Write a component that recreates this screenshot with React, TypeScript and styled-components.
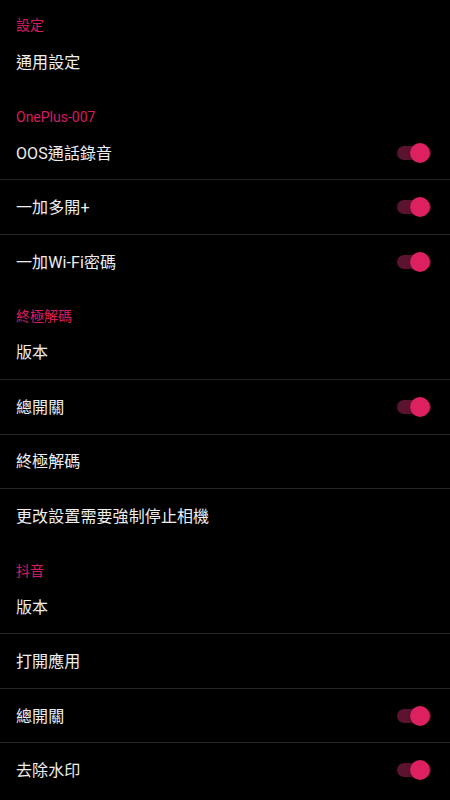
import React, { useState } from "react";
import styled, { createGlobalStyle } from "styled-components";

type Item = {
  id: string;
  label: string;
  toggle?: boolean;
};

type Section = {
  id: string;
  title: string;
  items: Item[];
};

const sections: Section[] = [
  { id: "s1", title: "設定", items: [{ id: "general", label: "通用設定" }] },
  {
    id: "s2",
    title: "OnePlus-007",
    items: [
      { id: "oos", label: "OOS通話錄音", toggle: true },
      { id: "multi", label: "一加多開+", toggle: true },
      { id: "wifi", label: "一加Wi-Fi密碼", toggle: true },
    ],
  },
  {
    id: "s3",
    title: "終極解碼",
    items: [
      { id: "ver1", label: "版本" },
      { id: "master1", label: "總開關", toggle: true },
      { id: "decode", label: "終極解碼" },
      { id: "camera", label: "更改設置需要強制停止相機" },
    ],
  },
  {
    id: "s4",
    title: "抖音",
    items: [
      { id: "ver2", label: "版本" },
      { id: "open", label: "打開應用" },
      { id: "master2", label: "總開關", toggle: true },
      { id: "watermark", label: "去除水印", toggle: true },
    ],
  },
];

const GlobalStyle = createGlobalStyle`
  html, body {
    margin: 0;
    padding: 0;
    background: #000;
  }
  body {
    font-family: Roboto, "Noto Sans CJK TC", "Noto Sans", sans-serif;
    -webkit-font-smoothing: antialiased;
  }
`;

const Screen = styled.div`
  width: 450px;
  height: 800px;
  overflow: hidden;
  background: #000;
`;

const CategoryTitle = styled.div<{ first: boolean }>`
  height: ${(p) => (p.first ? "35px" : "36.25px")};
  box-sizing: border-box;
  padding: ${(p) => (p.first ? "17px" : "19px")} 16px 0;
  font-size: 14px;
  line-height: 16px;
  color: #d81b60;
`;

const Row = styled.div<{ divider: boolean }>`
  height: 54.5px;
  box-sizing: border-box;
  padding: 2px 19px 0 16px;
  display: flex;
  align-items: center;
  justify-content: space-between;
  border-bottom: 1px solid ${(p) => (p.divider ? "#262626" : "transparent")};
`;

const Label = styled.span`
  font-size: 16px;
  line-height: 20px;
  color: #eeeeee;
  letter-spacing: 0.1px;
`;

const Switch = styled.button<{ on: boolean }>`
  position: relative;
  width: 34px;
  height: 14px;
  padding: 0;
  border: none;
  border-radius: 7px;
  background: ${(p) => (p.on ? "#5b1330" : "#3a3a3a")};
  cursor: pointer;
  margin-top: -2px;
`;

const Thumb = styled.span<{ on: boolean }>`
  position: absolute;
  top: -3px;
  left: ${(p) => (p.on ? "13px" : "-1px")};
  width: 20px;
  height: 20px;
  border-radius: 50%;
  background: ${(p) => (p.on ? "#dd2160" : "#bdbdbd")};
  box-shadow: 0 1px 2px rgba(0, 0, 0, 0.5);
`;

const App: React.FC = () => {
  const [state, setState] = useState<Record<string, boolean>>({
    oos: true,
    multi: true,
    wifi: true,
    master1: true,
    master2: true,
    watermark: true,
  });

  const flip = (id: string) => setState((s) => ({ ...s, [id]: !s[id] }));

  return (
    <Screen>
      <GlobalStyle />
      {sections.map((section, si) => (
        <div key={section.id}>
          <CategoryTitle first={si === 0}>{section.title}</CategoryTitle>
          {section.items.map((item, i) => (
            <Row key={item.id} divider={i < section.items.length - 1}>
              <Label>{item.label}</Label>
              {item.toggle && (
                <Switch on={!!state[item.id]} onClick={() => flip(item.id)}>
                  <Thumb on={!!state[item.id]} />
                </Switch>
              )}
            </Row>
          ))}
        </div>
      ))}
    </Screen>
  );
};

export default App;
